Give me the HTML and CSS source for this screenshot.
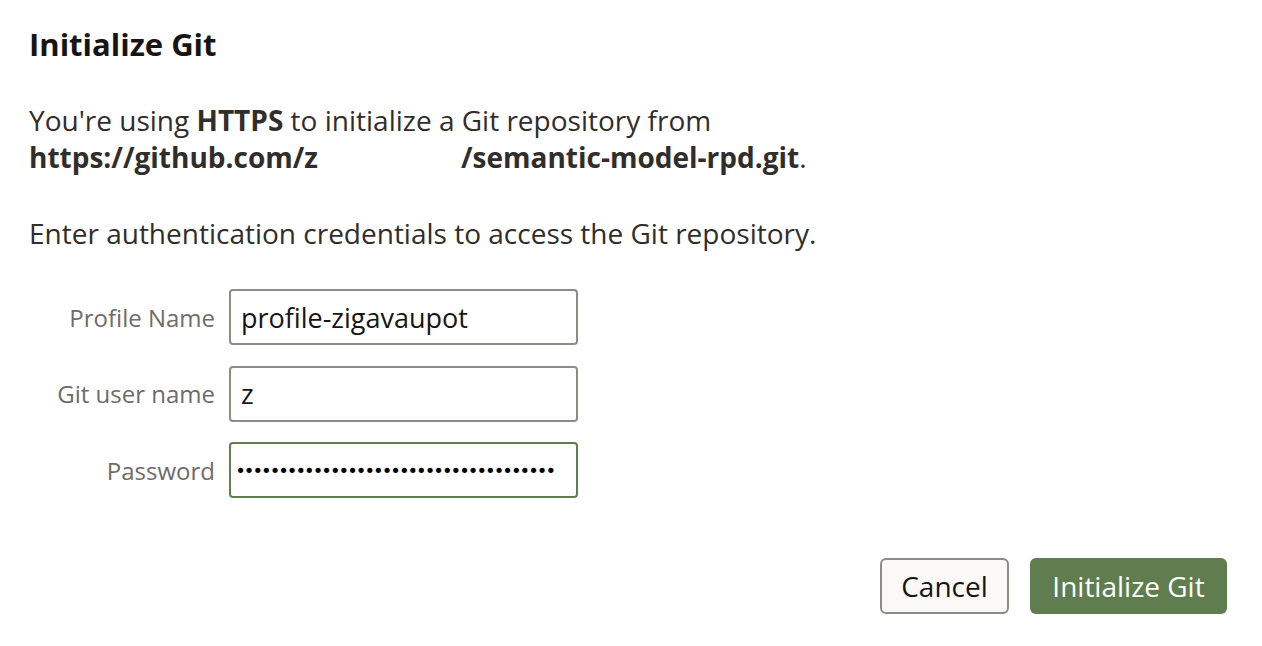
FILE: index.html
```html
<!DOCTYPE html>
<html>
<head>
<meta charset="utf-8">
<link rel="stylesheet" href="styles.css">
</head>
<body>
<div class="dialog">
  <h1 class="title">Initialize Git</h1>
  <p class="para">You're using <b>HTTPS</b> to initialize a Git repository from<br><b>https://github.com/z<span class="gap"></span>/semantic-model-rpd.git</b>.</p>
  <p class="para enter">Enter authentication credentials to access the Git repository.</p>
  <div class="form">
    <label class="label">Profile Name</label>
    <div class="field">profile-zigavaupot</div>
    <label class="label">Git user name</label>
    <div class="field">z</div>
    <label class="label">Password</label>
    <div class="field focus"><span class="dots">•••••••••••••••••••••••••••••••••••••</span></div>
  </div>
  <div class="actions">
    <button class="btn cancel">Cancel</button>
    <button class="btn primary">Initialize Git</button>
  </div>
</div>
</body>
</html>
```
FILE: styles.css
```css
html, body {
  margin: 0;
  background: #ffffff;
}
body {
  font-family: "Open Sans", "Noto Sans", sans-serif;
  color: #161513;
}
.dialog {
  width: 1262px;
  height: 646px;
  box-sizing: border-box;
  padding: 24px 35px 0 29px;
  display: flex;
  flex-direction: column;
}
.title {
  margin: 0;
  font-size: 31px;
  font-weight: 700;
  line-height: 40px;
  color: #161513;
}
.para {
  margin: 0;
  font-size: 28px;
  line-height: 37px;
  color: #312d2a;
}
.para:first-of-type {
  margin-top: 38px;
}
.para b {
  font-weight: 700;
}
.gap {
  display: inline-block;
  width: 143px;
}
.enter {
  margin-top: 39px;
}
.form {
  margin-top: 37px;
  display: grid;
  grid-template-columns: 186px 349px;
  column-gap: 14px;
  row-gap: 20.5px;
  align-items: center;
}
.label {
  text-align: right;
  font-size: 24px;
  color: #6f6b67;
}
.field {
  height: 56px;
  box-sizing: border-box;
  border: 2px solid #8f8b86;
  border-radius: 4px;
  padding: 0 10px;
  display: flex;
  align-items: center;
  font-size: 27px;
  color: #161513;
  overflow: hidden;
  white-space: nowrap;
}
.field.focus {
  border-color: #5f7d4f;
  direction: rtl;
  padding: 0 22px 0 10px;
}
.dots {
  font-size: 18px;
  letter-spacing: -2px;
  font-family: "DejaVu Sans", sans-serif;
  color: #000000;
}
.actions {
  margin-top: 60px;
  display: flex;
  justify-content: flex-end;
  gap: 21px;
}
.btn {
  height: 56px;
  border-radius: 6px;
  font-family: "Open Sans", "Noto Sans", sans-serif;
  font-size: 28px;
  padding: 0;
}
.cancel {
  background: #fbf9f8;
  border: 2px solid #8f8b86;
  color: #161513;
  width: 129px;
}
.primary {
  background: #5f7d4f;
  border: none;
  color: #ffffff;
  width: 197px;
}
```
